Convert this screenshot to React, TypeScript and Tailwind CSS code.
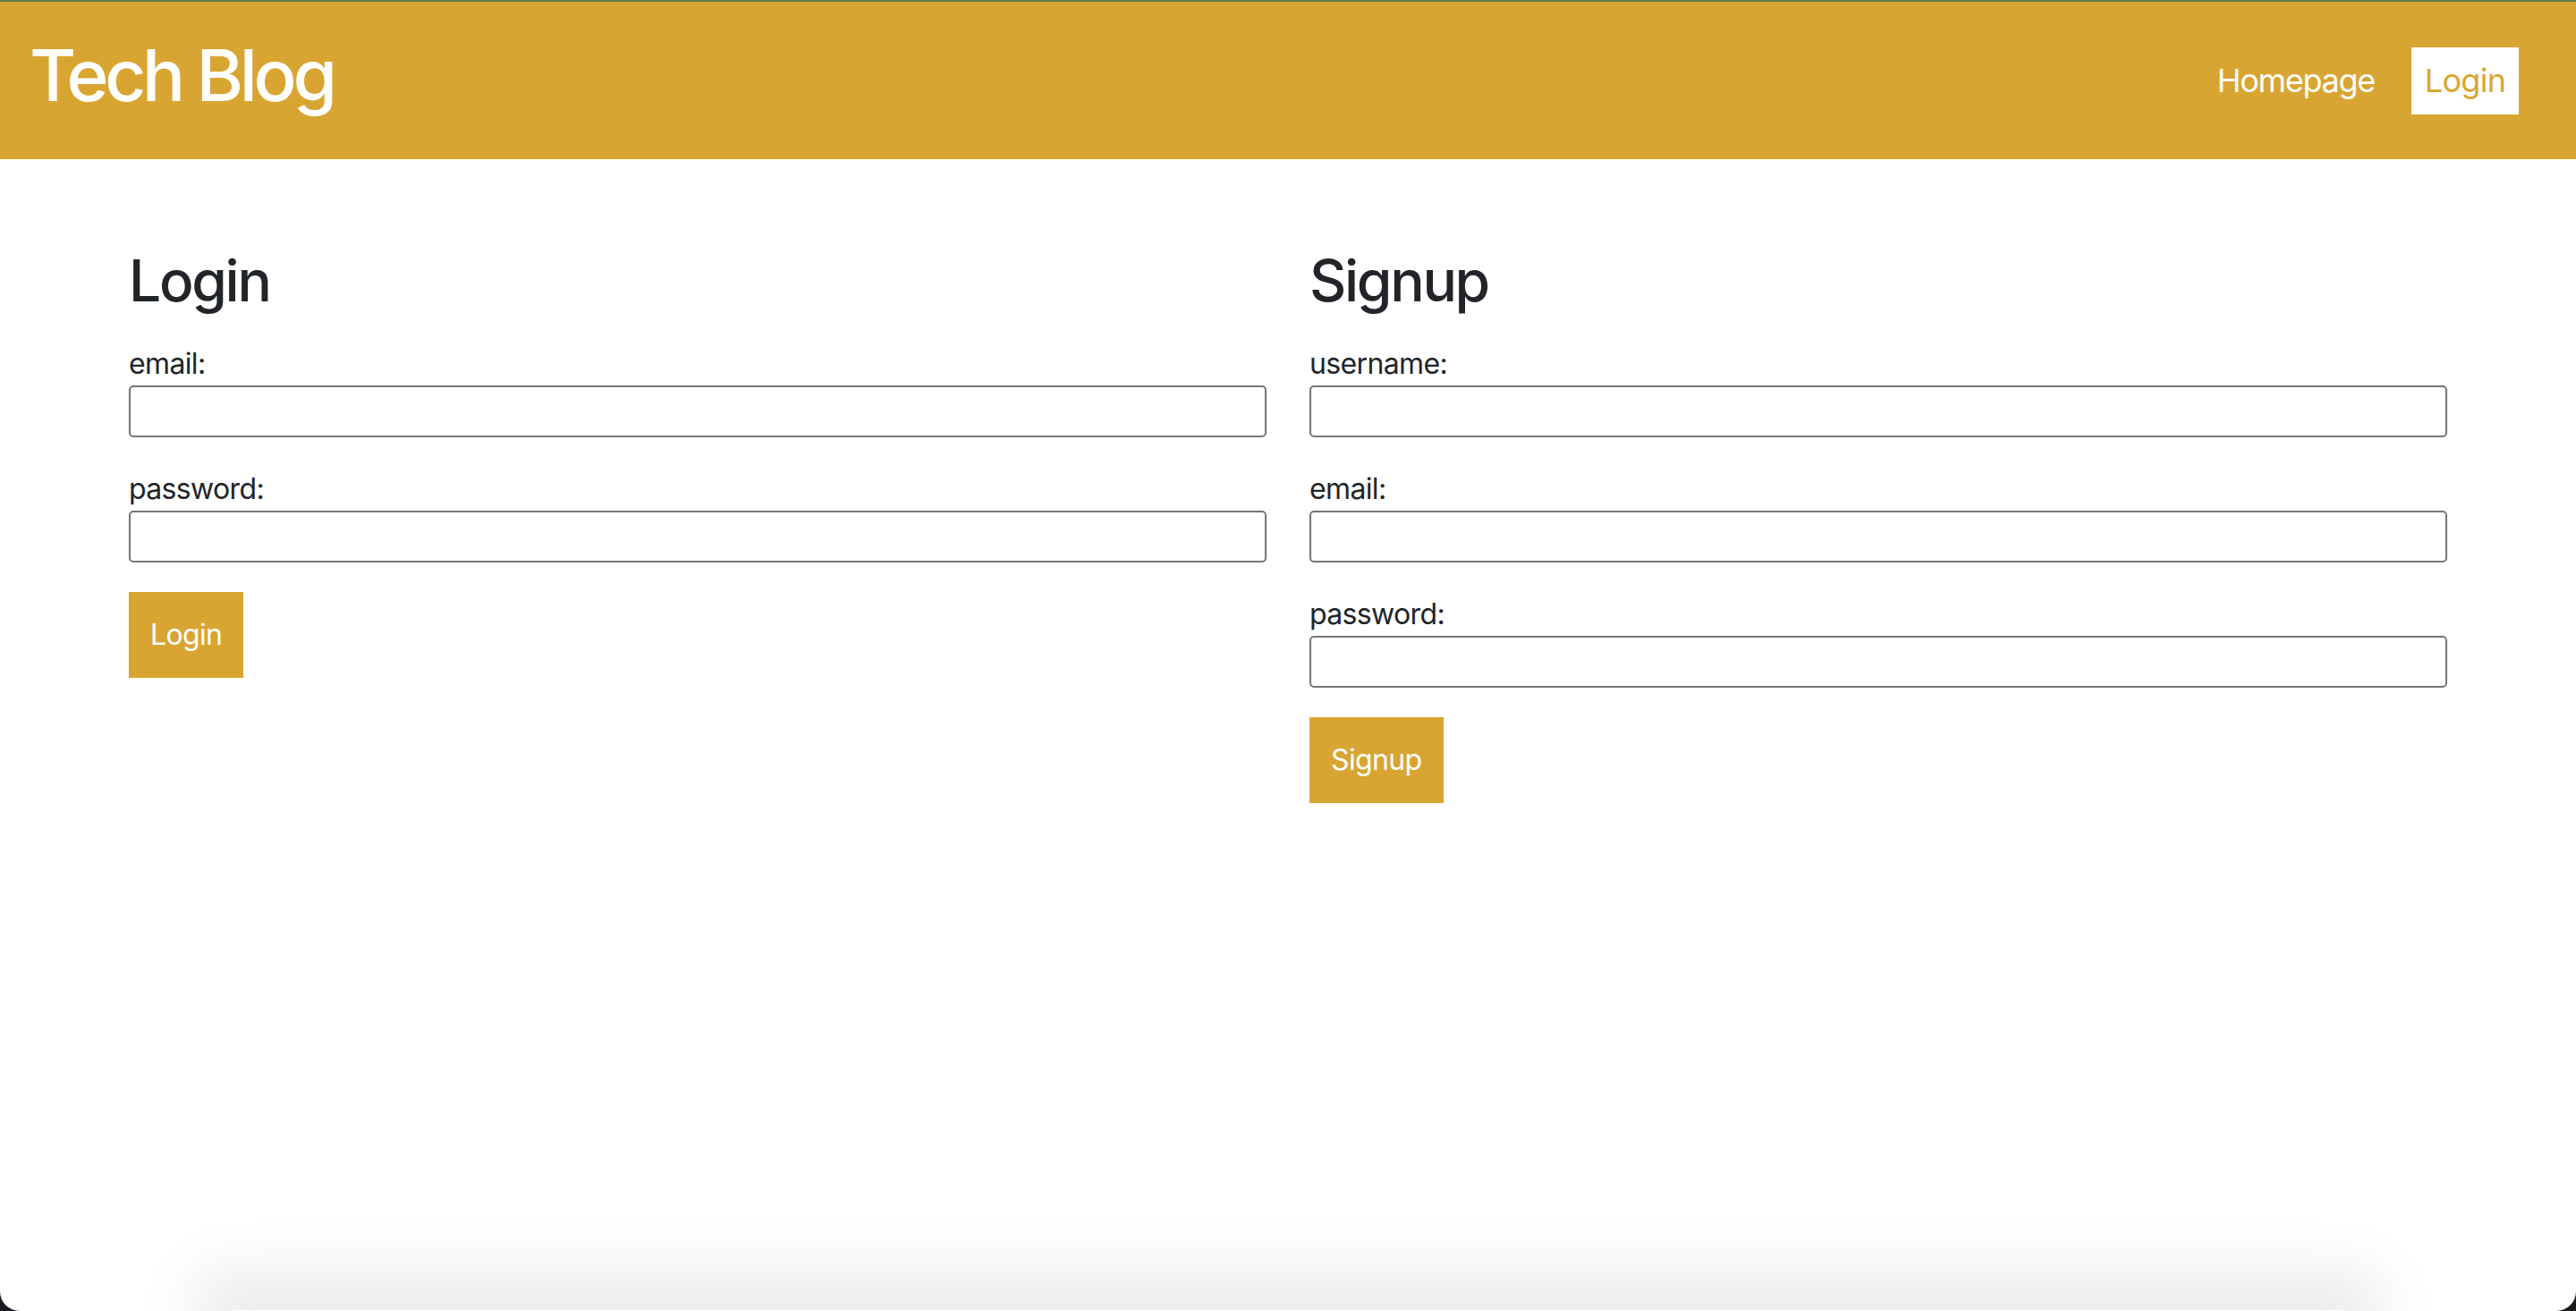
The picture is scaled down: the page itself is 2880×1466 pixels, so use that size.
import React from 'react'

interface Field {
  name: string
  type: string
}

const loginFields: Field[] = [
  { name: 'email', type: 'email' },
  { name: 'password', type: 'password' },
]

const signupFields: Field[] = [
  { name: 'username', type: 'text' },
  { name: 'email', type: 'email' },
  { name: 'password', type: 'password' },
]

const FormCard: React.FC<{ title: string; fields: Field[]; action: string }> = ({ title, fields, action }) => {
  return (
    <form className="flex flex-col items-start" onSubmit={(e) => e.preventDefault()}>
      <h2 className="text-[64px] leading-[77px] font-medium tracking-[-0.036em] mb-[30px]">{title}</h2>
      {fields.map((field) => (
        <div key={field.name} className="w-full mb-[33px]">
          <label className="block text-[32px] leading-[49px] tracking-[-0.02em]">{field.name}:</label>
          <input
            type={field.type}
            className="block w-full h-[58px] border-2 border-[#767676] rounded-[5px] bg-white"
          />
        </div>
      ))}
      <button className="h-[96px] px-[24px] bg-[#d9a532] text-white text-[32px] tracking-[-0.02em]">{action}</button>
    </form>
  )
}

export default function App() {
  return (
    <div className="h-[1466px] bg-[#1b1a1f] font-['Inter',sans-serif] text-[#212529]">
      <div className="h-full flex flex-col bg-white rounded-b-[22px] overflow-hidden border-t-2 border-[#5b8150]">
        <header className="h-[176px] shrink-0 bg-[#d9a532] flex items-center justify-between pl-[33px] pr-[64px]">
          <h1 className="text-[80px] leading-[80px] font-medium tracking-[-0.055em] text-white mb-[12px]">Tech Blog</h1>
          <nav className="flex items-center gap-[41px] text-[36px]">
            <a className="text-white tracking-[-0.036em]">Homepage</a>
            <a className="w-[120px] h-[75px] bg-white text-[#d9a532] tracking-[-0.02em] flex items-center justify-center">Login</a>
          </nav>
        </header>

        <main className="flex-1 px-[144px] pt-[97px]">
          <div className="grid grid-cols-2 gap-x-[48px]">
            <FormCard title="Login" fields={loginFields} action="Login" />
            <FormCard title="Signup" fields={signupFields} action="Signup" />
          </div>
        </main>

        <footer className="h-[1px] mx-[260px] shadow-[0_0_70px_40px_rgba(0,0,0,0.09)]" />
      </div>
    </div>
  )
}
